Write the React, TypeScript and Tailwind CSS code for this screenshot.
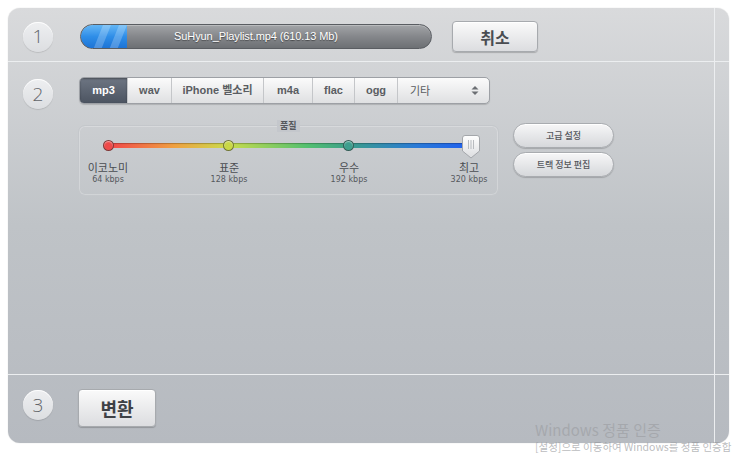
import React from "react";

const KR = '"Noto Sans CJK KR", "Liberation Sans", sans-serif';
const LAT = '"Liberation Sans", "Noto Sans CJK KR", sans-serif';

function StepBadge({ n }: { n: string }) {
  return (
    <div
      className="w-[30px] h-[30px] shrink-0 rounded-full flex items-center justify-center text-[19px] font-light text-[#62656a] bg-gradient-to-b from-[#eeeff1] to-[#dcdee1] shadow-[0_1px_1px_rgba(0,0,0,0.12),inset_0_1px_0_rgba(255,255,255,0.9)]"
      style={{ fontFamily: '"Open Sans", sans-serif' }}
    >
      {n}
    </div>
  );
}

function ProgressBar() {
  return (
    <div className="relative w-[352px] h-[25px] rounded-full border border-[#5a5d62] bg-gradient-to-b from-[#a3a5a8] via-[#85878b] to-[#6d7074] overflow-hidden shadow-[inset_0_1px_0_rgba(255,255,255,0.25)]">
      <div className="absolute left-0 top-0 bottom-0 w-[46px] rounded-l-full bg-gradient-to-b from-[#63b6f5] via-[#2f8ee8] to-[#1d74d6] overflow-hidden">
        <svg width="46" height="25" className="absolute inset-0">
          <polygon points="12,25 22,0 30,0 20,25" fill="rgba(255,255,255,0.22)" />
          <polygon points="28,25 38,0 46,0 36,25" fill="rgba(255,255,255,0.22)" />
        </svg>
      </div>
      <div
        className="absolute inset-0 flex items-center justify-center text-[11px] text-white [text-shadow:0_1px_1px_rgba(0,0,0,0.45)]"
        style={{ fontFamily: LAT, letterSpacing: "-0.1px" }}
      >
        SuHyun_Playlist.mp4 (610.13 Mb)
      </div>
    </div>
  );
}

function Segments() {
  const items = [
    { label: "wav", w: "w-[44px]" },
    { label: "iPhone 벨소리", w: "w-[92px]" },
    { label: "m4a", w: "w-[49px]" },
    { label: "flac", w: "w-[42px]" },
    { label: "ogg", w: "w-[43px]" },
  ];
  return (
    <div
      className="flex h-[27px] w-[411px] rounded-[5px] border border-[#9da0a5] bg-gradient-to-b from-[#fbfbfb] to-[#dfe0e2] shadow-[0_1px_1px_rgba(0,0,0,0.15)] overflow-hidden text-[11px] font-bold text-[#5a5d62]"
      style={{ fontFamily: LAT }}
    >
      <div className="w-[47px] flex items-center justify-center text-white bg-gradient-to-b from-[#6e7683] to-[#4c5461] shadow-[inset_0_1px_2px_rgba(0,0,0,0.35)]">
        mp3
      </div>
      {items.map((it) => (
        <div
          key={it.label}
          className={`${it.w} flex items-center justify-center border-l border-[#c4c6c9]`}
        >
          {it.label}
        </div>
      ))}
      <div className="flex-1 flex items-center justify-between border-l border-[#c4c6c9] pl-[12px] pr-[10px]">
        <span className="font-normal" style={{ fontFamily: KR }}>기타</span>
        <svg width="8" height="11" viewBox="0 0 8 11">
          <polygon points="4,1 7.5,4.5 0.5,4.5" fill="#6b6e73" />
          <polygon points="4,10 7.5,6.5 0.5,6.5" fill="#6b6e73" />
        </svg>
      </div>
    </div>
  );
}

function Dot({ color, left }: { color: string; left: number }) {
  return (
    <div
      className="absolute top-[14px] w-[11px] h-[11px] rounded-full border border-[rgba(40,40,40,0.55)] shadow-[inset_0_1px_1px_rgba(255,255,255,0.5)]"
      style={{ left, background: color }}
    />
  );
}

function QualityPanel() {
  const stops = [
    { name: "이코노미", rate: "64 kbps", x: 29 },
    { name: "표준", rate: "128 kbps", x: 150 },
    { name: "우수", rate: "192 kbps", x: 270 },
    { name: "최고", rate: "320 kbps", x: 390 },
  ];
  return (
    <div className="relative w-[421px] h-[71px] rounded-[7px] border border-[#c4c7cb] shadow-[inset_0_0_0_1px_rgba(255,255,255,0.25)]">
      <div
        className="absolute top-[-6px] left-[198px] px-[3px] bg-[#c4c7cc] text-[9px] font-bold text-[#55585d] leading-[12px]"
        style={{ fontFamily: KR }}
      >
        품질
      </div>
      {/* gradient track */}
      <div
        className="absolute top-[17px] left-[30px] h-[5px] w-[362px] rounded-full shadow-[inset_0_1px_1px_rgba(0,0,0,0.25)]"
        style={{ background: "linear-gradient(to right,#f2464a 0%,#f0a040 18%,#c9dc4c 33%,#52c070 55%,#3a9a90 68%,#2a7ad8 85%,#1f5ef0 100%)" }}
      />
      <Dot color="#ee4a4a" left={24} />
      <Dot color="#c9d846" left={144} />
      <Dot color="#3f9e8e" left={264} />
      {/* thumb */}
      <svg width="18" height="24" viewBox="0 0 18 24" className="absolute left-[383px] top-[9px]">
        <defs>
          <linearGradient id="thumbGrad" x1="0" y1="0" x2="0" y2="1">
            <stop offset="0" stopColor="#ffffff" />
            <stop offset="1" stopColor="#dcdde0" />
          </linearGradient>
        </defs>
        <path d="M3 0.5 H15 Q17.5 0.5 17.5 3 V16 L9 23 L0.5 16 V3 Q0.5 0.5 3 0.5 Z" fill="url(#thumbGrad)" stroke="#a4a7ab" />
        <line x1="6.5" y1="5" x2="6.5" y2="14" stroke="#b8bbbf" />
        <line x1="9" y1="5" x2="9" y2="14" stroke="#b8bbbf" />
        <line x1="11.5" y1="5" x2="11.5" y2="14" stroke="#b8bbbf" />
      </svg>
      {stops.map((s) => (
        <div
          key={s.name}
          className="absolute top-[34px] w-[60px] -ml-[30px] flex flex-col items-center"
          style={{ left: s.x }}
        >
          <span className="text-[11px] leading-[14px] text-[#4a4d52]" style={{ fontFamily: KR }}>
            {s.name}
          </span>
          <span className="text-[8px] leading-[12px] text-[#55585d]" style={{ fontFamily: '"DejaVu Sans", sans-serif' }}>
            {s.rate}
          </span>
        </div>
      ))}
    </div>
  );
}

function PillButton({ label }: { label: string }) {
  return (
    <div
      className="w-[101px] h-[25px] rounded-full border border-[#a9acb0] bg-gradient-to-b from-[#f7f7f8] to-[#d6d8db] shadow-[0_1px_1px_rgba(0,0,0,0.18),inset_0_1px_0_#fff] flex items-center justify-center text-[9px] font-medium text-[#55585d]"
      style={{ fontFamily: KR }}
    >
      {label}
    </div>
  );
}

function Strip() {
  return <div className="w-[15px] shrink-0 border-l border-[#eceef0]" />;
}

export default function App() {
  return (
    <div className="relative w-[743px] h-[462px] bg-white overflow-hidden">
      <div className="ml-[8px] mt-[8px] w-[721px] h-[435px] rounded-[12px] overflow-hidden flex flex-col bg-gradient-to-b from-[#d9dadc] via-[#bfc3c7] to-[#b6bac0] shadow-[0_0_1px_rgba(0,0,0,0.25)]">
        {/* step 1 */}
        <div className="flex h-[54px] border-b border-[#eceef0]">
          <div className="flex-1 flex items-center pl-[15px] pt-[4px]">
            <StepBadge n="1" />
            <div className="ml-[27px]">
              <ProgressBar />
            </div>
            <div
              className="ml-[20px] w-[86px] h-[31px] rounded-[4px] border border-[#a7aaae] bg-gradient-to-b from-[#fafafa] to-[#dcdde0] shadow-[0_1px_1px_rgba(0,0,0,0.2),inset_0_1px_0_#fff] flex items-center justify-center text-[16px] font-bold text-[#4a4d52]"
              style={{ fontFamily: KR }}
            >
              취소
            </div>
          </div>
          <Strip />
        </div>

        {/* step 2 */}
        <div className="flex h-[313px] border-b border-[#eceef0]">
          <div className="flex-1 flex items-start pl-[15px] pt-[17px]">
            <StepBadge n="2" />
            <div className="ml-[26px] -mt-[2px] flex flex-col">
              <Segments />
              <div className="mt-[21px] flex items-start">
                <div className="-ml-[1px]">
                  <QualityPanel />
                </div>
                <div className="ml-[14px] -mt-[2px] flex flex-col gap-[4px]">
                  <PillButton label="고급 설정" />
                  <PillButton label="트랙 정보 편집" />
                </div>
              </div>
            </div>
          </div>
          <Strip />
        </div>

        {/* step 3 */}
        <div className="flex flex-1">
          <div className="flex-1 flex items-start pl-[15px] pt-[15px]">
            <StepBadge n="3" />
            <div
              className="ml-[25px] -mt-[1px] w-[78px] h-[38px] rounded-[4px] border border-[#a7aaae] bg-gradient-to-b from-[#fafafa] to-[#dcdde0] shadow-[0_1px_1px_rgba(0,0,0,0.2),inset_0_1px_0_#fff] flex items-center justify-center text-[18px] font-bold text-[#3e4146]"
              style={{ fontFamily: KR }}
            >
              변환
            </div>
          </div>
          <Strip />
        </div>
      </div>

      {/* activation watermark */}
      <div className="absolute left-[535px] top-[420px] whitespace-nowrap pointer-events-none" style={{ fontFamily: '"Noto Sans CJK KR", sans-serif' }}>
        <div className="text-[15px] leading-[20px] text-[rgba(150,152,156,0.55)]">Windows 정품 인증</div>
        <div className="text-[10.5px] leading-[14px] text-[rgba(140,142,146,0.6)]">[설정]으로 이동하여 Windows를 정품 인증합</div>
      </div>
    </div>
  );
}
